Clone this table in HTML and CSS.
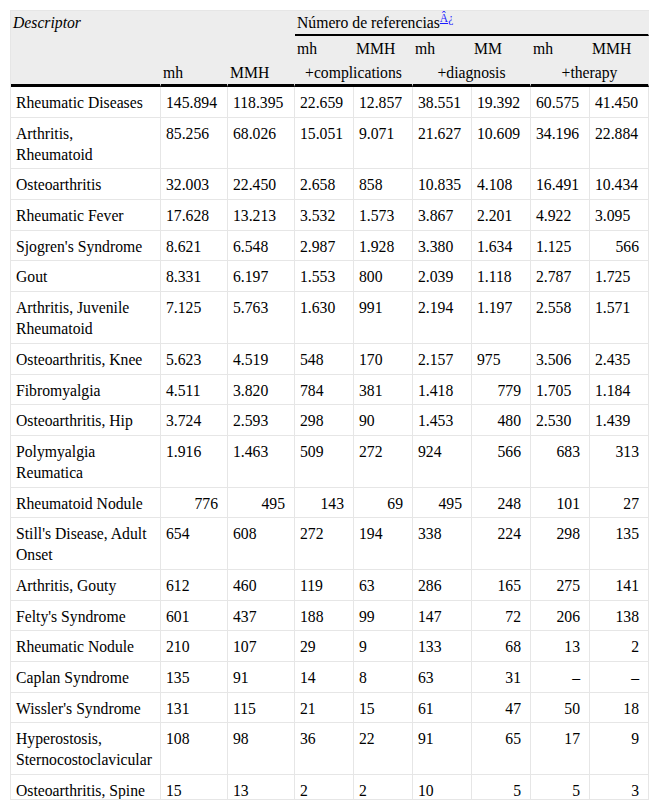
FILE: index.html
```html
<!DOCTYPE html>
<html lang="es">
<head>
<meta charset="utf-8">
<title>Número de referencias</title>
<link rel="stylesheet" href="styles.css">
</head>
<body>
<div class="table-wrap">
<table class="data">
<colgroup>
<col class="w-desc"><col class="w-a"><col class="w-a">
<col class="w-b"><col class="w-b"><col class="w-b"><col class="w-b"><col class="w-b"><col class="w-b">
</colgroup>
<thead>
<tr class="head-top">
<th rowspan="3" class="desc-head">Descriptor</th>
<th colspan="2" rowspan="2" class="blank-head"></th>
<th colspan="6" class="group-head">Número de referencias<sup class="fn"><a href="#">Â¿</a></sup></th>
</tr>
<tr class="head-mid">
<th>mh</th><th>MMH</th><th>mh</th><th>MM</th><th>mh</th><th>MMH</th>
</tr>
<tr class="head-low">
<th class="low-head">mh</th><th class="low-head">MMH</th>
<th colspan="2" class="low-head center">+complications</th>
<th colspan="2" class="low-head center">+diagnosis</th>
<th colspan="2" class="low-head center">+therapy</th>
</tr>
</thead>
<tbody>
<tr><td>Rheumatic Diseases</td><td>145.894</td><td>118.395</td><td>22.659</td><td>12.857</td><td>38.551</td><td>19.392</td><td>60.575</td><td>41.450</td></tr>
<tr><td>Arthritis, Rheumatoid</td><td>85.256</td><td>68.026</td><td>15.051</td><td>9.071</td><td>21.627</td><td>10.609</td><td>34.196</td><td>22.884</td></tr>
<tr><td>Osteoarthritis</td><td>32.003</td><td>22.450</td><td>2.658</td><td>858</td><td>10.835</td><td>4.108</td><td>16.491</td><td>10.434</td></tr>
<tr><td>Rheumatic Fever</td><td>17.628</td><td>13.213</td><td>3.532</td><td>1.573</td><td>3.867</td><td>2.201</td><td>4.922</td><td>3.095</td></tr>
<tr><td>Sjogren's Syndrome</td><td>8.621</td><td>6.548</td><td>2.987</td><td>1.928</td><td>3.380</td><td>1.634</td><td>1.125</td><td class="r">566</td></tr>
<tr><td>Gout</td><td>8.331</td><td>6.197</td><td>1.553</td><td>800</td><td>2.039</td><td>1.118</td><td>2.787</td><td>1.725</td></tr>
<tr><td>Arthritis, Juvenile Rheumatoid</td><td>7.125</td><td>5.763</td><td>1.630</td><td>991</td><td>2.194</td><td>1.197</td><td>2.558</td><td>1.571</td></tr>
<tr><td>Osteoarthritis, Knee</td><td>5.623</td><td>4.519</td><td>548</td><td>170</td><td>2.157</td><td>975</td><td>3.506</td><td>2.435</td></tr>
<tr><td>Fibromyalgia</td><td>4.511</td><td>3.820</td><td>784</td><td>381</td><td>1.418</td><td class="r">779</td><td>1.705</td><td>1.184</td></tr>
<tr><td>Osteoarthritis, Hip</td><td>3.724</td><td>2.593</td><td>298</td><td>90</td><td>1.453</td><td class="r">480</td><td>2.530</td><td>1.439</td></tr>
<tr><td>Polymyalgia Reumatica</td><td>1.916</td><td>1.463</td><td>509</td><td>272</td><td>924</td><td class="r">566</td><td class="r">683</td><td class="r">313</td></tr>
<tr><td>Rheumatoid Nodule</td><td class="r">776</td><td class="r">495</td><td class="r">143</td><td class="r">69</td><td class="r">495</td><td class="r">248</td><td class="r">101</td><td class="r">27</td></tr>
<tr><td>Still's Disease, Adult Onset</td><td>654</td><td>608</td><td>272</td><td>194</td><td>338</td><td class="r">224</td><td class="r">298</td><td class="r">135</td></tr>
<tr><td>Arthritis, Gouty</td><td>612</td><td>460</td><td>119</td><td>63</td><td>286</td><td class="r">165</td><td class="r">275</td><td class="r">141</td></tr>
<tr><td>Felty's Syndrome</td><td>601</td><td>437</td><td>188</td><td>99</td><td>147</td><td class="r">72</td><td class="r">206</td><td class="r">138</td></tr>
<tr><td>Rheumatic Nodule</td><td>210</td><td>107</td><td>29</td><td>9</td><td>133</td><td class="r">68</td><td class="r">13</td><td class="r">2</td></tr>
<tr><td>Caplan Syndrome</td><td>135</td><td>91</td><td>14</td><td>8</td><td>63</td><td class="r">31</td><td class="r">–</td><td class="r">–</td></tr>
<tr><td>Wissler's Syndrome</td><td>131</td><td>115</td><td>21</td><td>15</td><td>61</td><td class="r">47</td><td class="r">50</td><td class="r">18</td></tr>
<tr><td>Hyperostosis, Sternocostoclavicular</td><td>108</td><td>98</td><td>36</td><td>22</td><td>91</td><td class="r">65</td><td class="r">17</td><td class="r">9</td></tr>
<tr><td>Osteoarthritis, Spine</td><td>15</td><td>13</td><td>2</td><td>2</td><td>10</td><td class="r">5</td><td class="r">5</td><td class="r">3</td></tr>
</tbody>
</table>
</div>
</body>
</html>
```

FILE: styles.css
```css
body {
  margin: 10px;
  background: #ffffff;
  color: #000000;
  font-family: "Liberation Serif", "Times New Roman", serif;
  font-size: 15.7px;
}

.table-wrap {
  width: 638px;
  height: 788px;
  overflow: hidden;
  border: 1px solid #e6e6e6;
  border-right: 0;
}

.data {
  width: 638px;
  table-layout: fixed;
  border-collapse: separate;
  border-spacing: 0;
}

.w-desc { width: 150px; }
.w-a { width: 67px; }
.w-b { width: 59px; }

.data th,
.data td {
  line-height: 21px;
  text-align: left;
  vertical-align: top;
  font-weight: normal;
  border-right: 1px solid #e6e6e6;
}

.data thead th {
  background: #ededed;
  border-right-color: #ededed;
  padding: 1px 2px;
}

.data .head-mid th {
  padding-top: 2px;
}

.data .head-low th {
  padding-top: 2px;
}

.data thead th.desc-head {
  font-style: italic;
  padding-top: 1px;
  border-bottom: 3px solid #000000;
}

.data thead th.group-head {
  border-bottom: 2px solid #000000;
}

.data thead th.low-head {
  border-bottom: 3px solid #000000;
}

.data thead th.center {
  text-align: center;
}

.fn {
  font-size: 11.5px;
  line-height: 0;
  vertical-align: 6px;
}

.fn a {
  color: #1a1aff;
  text-decoration: underline;
}

.data tbody td {
  padding: 5px 9px 3.7px 5px;
  border-bottom: 1px solid #e6e6e6;
}

.data tbody td.r {
  text-align: right;
}
```
